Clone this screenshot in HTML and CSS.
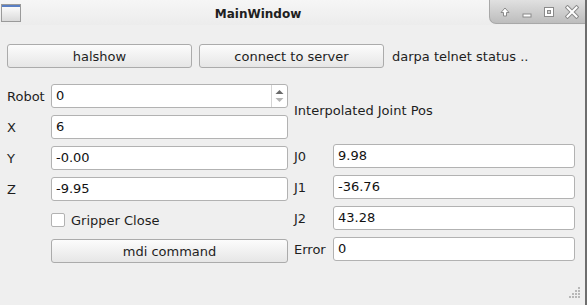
FILE: index.html
```html
<!DOCTYPE html>
<html lang="en">
<head>
    <meta charset="UTF-8">
    <title>MainWindow</title>
    <link rel="stylesheet" href="styles.css">
</head>
<body>
    <div class="window">
        <div class="titlebar">
            <div class="app-icon"><div class="app-icon-bar"></div></div>
            <div class="title">MainWindow</div>
            <div class="wm-buttons">
                <svg width="12" height="12" viewBox="0 0 12 12"><path d="M6 2 L10 6.5 L7.5 6.5 L7.5 10 L4.5 10 L4.5 6.5 L2 6.5 Z" fill="#fff" stroke="#8a8a8a" stroke-width="1"/></svg>
                <svg width="12" height="12" viewBox="0 0 12 12"><rect x="2" y="8" width="8" height="3" fill="#fff" stroke="#8a8a8a" stroke-width="1"/></svg>
                <svg width="12" height="12" viewBox="0 0 12 12"><rect x="1.5" y="1.5" width="9" height="9" fill="none" stroke="#8a8a8a" stroke-width="1"/><rect x="3" y="3" width="6" height="6" fill="none" stroke="#fff" stroke-width="2"/><rect x="4.5" y="4.5" width="3" height="3" fill="none" stroke="#8a8a8a" stroke-width="1"/></svg>
                <svg width="14" height="14" viewBox="0 0 14 14"><path d="M2.5 2.5 L11.5 11.5 M11.5 2.5 L2.5 11.5" stroke="#8a8a8a" stroke-width="4" stroke-linecap="square"/><path d="M2.5 2.5 L11.5 11.5 M11.5 2.5 L2.5 11.5" stroke="#fff" stroke-width="2" stroke-linecap="square"/></svg>
            </div>
        </div>

        <div class="content">
            <div class="top-row">
                <button class="push-btn wide">halshow</button>
                <button class="push-btn wide">connect to server</button>
                <span class="status">darpa telnet status ..</span>
            </div>

            <div class="panels">
                <div class="form left">
                    <span class="lbl">Robot</span>
                    <div class="field spin">
                        <span class="val">0</span>
                        <div class="spin-arrows">
                            <svg width="9" height="6" viewBox="0 0 9 6"><path d="M0.5 5 L4.5 1 L8.5 5 Z" fill="#6a6a6a"/></svg>
                            <svg width="9" height="6" viewBox="0 0 9 6"><path d="M0.5 1 L4.5 5 L8.5 1 Z" fill="#b4b4b4"/></svg>
                        </div>
                    </div>
                    <span class="lbl">X</span>
                    <div class="field">6</div>
                    <span class="lbl">Y</span>
                    <div class="field">-0.00</div>
                    <span class="lbl">Z</span>
                    <div class="field">-9.95</div>
                    <span></span>
                    <label class="check"><span class="box"></span>Gripper Close</label>
                    <span></span>
                    <button class="push-btn">mdi command</button>
                </div>

                <div class="form right">
                    <span class="heading">Interpolated Joint Pos</span>
                    <span class="lbl">J0</span>
                    <div class="field">9.98</div>
                    <span class="lbl">J1</span>
                    <div class="field">-36.76</div>
                    <span class="lbl">J2</span>
                    <div class="field">43.28</div>
                    <span class="lbl">Error</span>
                    <div class="field">0</div>
                </div>
            </div>
        </div>

        <div class="grip">
            <svg width="12" height="12" viewBox="0 0 12 12" fill="#b8b8b8">
                <rect x="9" y="0" width="2" height="2"/>
                <rect x="6" y="3" width="2" height="2"/><rect x="9" y="3" width="2" height="2"/>
                <rect x="3" y="6" width="2" height="2"/><rect x="6" y="6" width="2" height="2"/><rect x="9" y="6" width="2" height="2"/>
                <rect x="0" y="9" width="2" height="2"/><rect x="3" y="9" width="2" height="2"/><rect x="6" y="9" width="2" height="2"/><rect x="9" y="9" width="2" height="2"/>
            </svg>
        </div>
    </div>
</body>
</html>
```

FILE: styles.css
```css
body {
    margin: 0;
    background-color: #efefef;
    font-family: "DejaVu Sans", sans-serif;
    font-size: 12px;
    color: #1e1e1e;
}
.window {
    width: 587px;
    height: 305px;
    box-sizing: border-box;
    border-right: 2px solid #6e6e6e;
    position: relative;
    overflow: hidden;
}
.titlebar {
    display: flex;
    align-items: flex-start;
    height: 25px;
    background: linear-gradient(#f6f6f6, #ececec);
}
.app-icon {
    width: 18px;
    height: 16px;
    margin: 4px 0 0 1px;
    border: 1px solid #9a9a9a;
    background: linear-gradient(#ffffff, #dadada);
}
.app-icon-bar {
    height: 2px;
    background-color: #5a7fc4;
}
.title {
    flex: 1;
    text-align: center;
    font-weight: bold;
    line-height: 28px;
    padding-left: 6px;
    color: #202020;
}
.wm-buttons {
    display: flex;
    align-items: center;
    gap: 10px;
    width: 96px;
    height: 24px;
    box-sizing: border-box;
    padding-left: 9px;
    background: linear-gradient(#e0e0e0, #bdbdbd);
    border-left: 1px solid #a8a8a8;
    border-bottom: 1px solid #a8a8a8;
    border-bottom-left-radius: 7px;
}
.content {
    padding: 19px 0 0 7px;
}
.top-row {
    display: flex;
    align-items: center;
    gap: 7px;
}
.push-btn {
    height: 24px;
    box-sizing: border-box;
    border: 1px solid #ababab;
    border-radius: 3px;
    background: linear-gradient(#fcfcfc, #e6e6e6);
    font-family: inherit;
    font-size: 13px;
    color: #1e1e1e;
    padding: 0;
}
.push-btn.wide {
    width: 185px;
}
.status {
    font-size: 13px;
    margin-left: 1px;
}
.panels {
    display: flex;
    gap: 6px;
    margin-top: 16px;
}
.form {
    display: grid;
    grid-auto-rows: 24px;
    row-gap: 7px;
    align-items: center;
}
.form.left {
    grid-template-columns: 44px 237px;
}
.form.right {
    grid-template-columns: 39px 242px;
    grid-template-rows: 53px;
}
.heading {
    grid-column: 1 / span 2;
    font-size: 13px;
}
.lbl {
    font-size: 13px;
}
.field {
    height: 24px;
    box-sizing: border-box;
    border: 1px solid #b2b2b2;
    border-radius: 3px;
    background-color: #fff;
    padding: 0 4px;
    font-size: 13px;
    line-height: 22px;
    color: #111;
}
.field.spin {
    display: flex;
    padding-right: 0;
}
.val {
    flex: 1;
}
.spin-arrows {
    width: 15px;
    border-left: 1px solid #d4d4d4;
    display: flex;
    flex-direction: column;
    align-items: center;
    justify-content: center;
    gap: 2px;
}
.check {
    display: flex;
    align-items: center;
    gap: 6px;
    font-size: 13px;
}
.box {
    width: 12px;
    height: 12px;
    border: 1px solid #b2b2b2;
    border-radius: 2px;
    background-color: #fff;
}
.grip {
    position: absolute;
    right: 4px;
    bottom: 3px;
}
```
